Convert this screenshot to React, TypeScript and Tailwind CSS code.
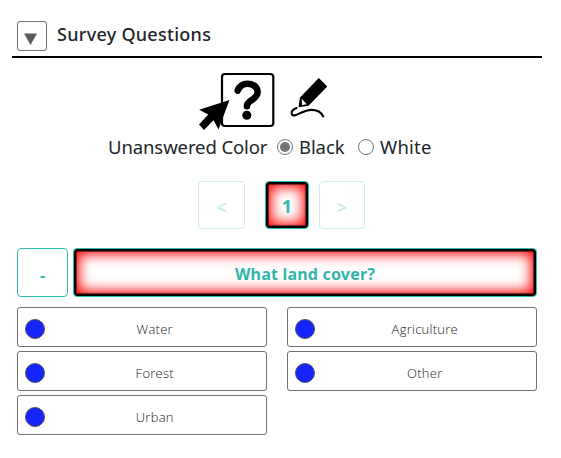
import React from "react";

function Option({ label }: { label: string }) {
  return (
    <button className="flex h-10 w-[250px] items-center rounded-[3px] border border-[#6f6f6f] pl-[6.5px] pt-[5px]">
      <span className="-mt-px h-5 w-5 shrink-0 rounded-full border border-[#505060] bg-[#1524fb]" />
      <span className="-mt-px flex-1 pr-[1px] text-center font-['Open_Sans',sans-serif] text-[13px] font-light leading-5 tracking-[0.25px] text-[#222]">
        {label}
      </span>
    </button>
  );
}

function Radio({ checked }: { checked?: boolean }) {
  return (
    <span className="flex h-4 w-4 shrink-0 items-center justify-center rounded-full border-[1.3px] border-[#767676]">
      {checked && <span className="h-[10px] w-[10px] rounded-full bg-[#767676]" />}
    </span>
  );
}

const glow =
  "shadow-[inset_0_0_1px_2.5px_#000,inset_0_0_13px_5px_#f00]";

export default function App() {
  return (
    <div className="h-[458px] w-[561px] overflow-hidden bg-white pl-3 pt-[21px] font-['Noto_Sans',sans-serif] text-[#212529]">
      <header className="flex h-[37px] w-[530px] items-start border-b-2 border-black pl-[5px]">
        <button className="flex h-[30px] w-[30px] items-center justify-center rounded-[3px] border border-[#707070]">
          <svg className="mt-[5px] -ml-[4px]" width="13" height="12" viewBox="0 0 13 12">
            <path d="M0 0.5h13L6.5 12z" fill="#5a5a5a" />
          </svg>
        </button>
        <h2 className="ml-[10px] whitespace-nowrap text-[18px] font-medium leading-[26px] tracking-[0.28px]">Survey Questions</h2>
      </header>

      <div className="ml-[186px] mt-[14px] flex h-[60px] w-[132px]">
        <svg width="132" height="60" viewBox="198 72 132 60">
          <rect x="222" y="74" width="51.3" height="52" rx="3" fill="#fff" stroke="#000" strokeWidth="2.2" />
          <path d="M237.700 90.600C239.400 86.200 242.500 83.800 247.600 83.800c5.900 0 10 3.500 10 8.100 0 7.700-10.700 8.300-10.700 14.300" fill="none" stroke="#000" strokeWidth="6.600" strokeLinecap="round" strokeLinejoin="round" />
          <circle cx="246.800" cy="115.300" r="4.500" />
          <path d="M229.500 100 199.200 109.800 208.200 114.500 199 124.500 204 130 213.500 120.200 218.500 129.500z" />
          <path d="M318.800 78 327.300 86.400 308.500 105.800 298.500 107.300 300 97.500z" />
          <path d="M301.700 98.700 306.800 104.200 302 105z" fill="#fff" />
          <path d="M296.500 108c-3.500 1-5.800 3.800-4.600 6.400 2.500 4 10.500-4.600 19.500-4.600 6 0 10 2.800 11.700 6.600" fill="none" stroke="#000" strokeWidth="2.200" strokeLinecap="round" />
        </svg>
      </div>

      <div className="ml-24 flex h-[30px] items-center whitespace-nowrap text-[18.5px]">
        <span className="w-[169px] tracking-[-0.1px]">Unanswered Color</span>
        <Radio checked />
        <span className="ml-[6px] w-[59px] tracking-[-0.1px]">Black</span>
        <Radio />
        <span className="ml-[6px] tracking-[0.2px]">White</span>
      </div>

      <nav className="ml-[186px] mt-[19px] flex h-12 font-['Open_Sans',sans-serif] text-[18px] font-semibold">
        <button className="h-12 w-[47px] rounded-[4px] border border-[#cbeee9] pt-1 text-[#c3ebe6]">&lt;</button>
        <button className={`ml-5 h-12 w-11 rounded-[4px] border border-[#31bab0] pt-0.5 text-[18px] font-bold text-[#31bab0] ${glow}`}>1</button>
        <button className="ml-[10px] h-12 w-[46px] rounded-[4px] border border-[#cbeee9] pt-1 text-[#c3ebe6]">&gt;</button>
      </nav>

      <div className="ml-[5px] mt-[19px] flex h-[49px] font-['Noto_Sans',sans-serif] text-[16px] font-bold text-[#31b5aa]">
        <button className="w-[51px] rounded-[4px] border border-[#31bab0] pt-1">-</button>
        <button className={`ml-[5px] w-[464px] rounded-[4px] border border-[#31bab0] pt-[3px] tracking-[0.2px] ${glow}`}>What land cover?</button>
      </div>

      <div className="ml-[5px] mt-[10px] grid w-[520px] grid-cols-[250px_250px] gap-x-5 gap-y-1">
        <Option label="Water" />
        <Option label="Agriculture" />
        <Option label="Forest" />
        <Option label="Other" />
        <Option label="Urban" />
      </div>
    </div>
  );
}
